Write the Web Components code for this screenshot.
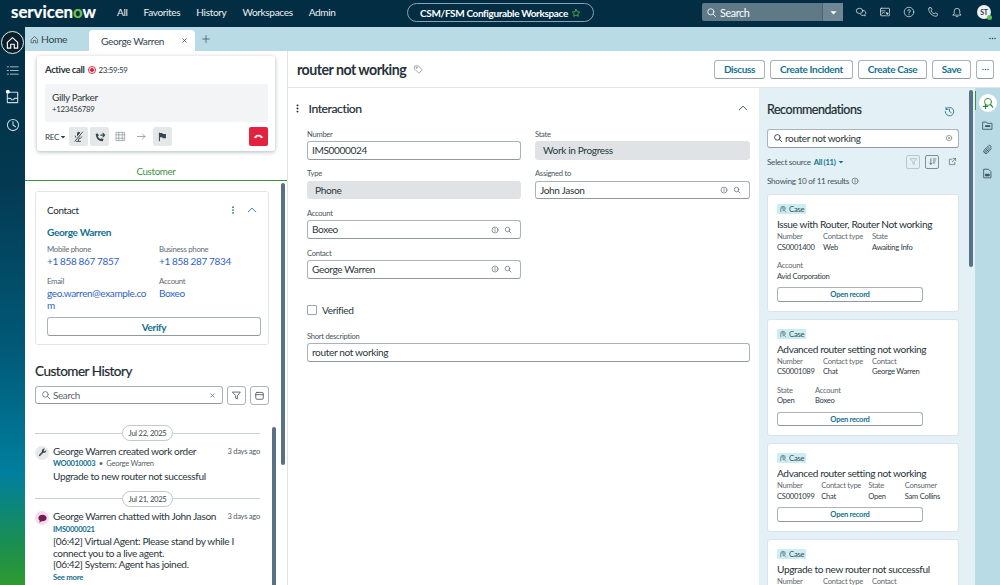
<!DOCTYPE html>
<html lang="en">
<head>
<meta charset="utf-8">
<title>George Warren</title>
<style>
  html, body { margin: 0; height: 100%; overflow: hidden; font-family: Lato, "Noto Sans", sans-serif; color: #1f2a30; background: #fff; }
</style>
</head>
<body>
<sn-app>
  <sn-nav slot="nav"></sn-nav>
  <sn-rail slot="rail"></sn-rail>
  <sn-tabs slot="tabs"></sn-tabs>
  <sn-customer slot="left"></sn-customer>
  <sn-record slot="main"></sn-record>
</sn-app>

<script>
(function () {
  'use strict';

  const ICONS = {
    search: '<circle cx="7" cy="7" r="4.5"/><path d="M10.4 10.4 14 14"/>',
    caret: '<path d="M3.5 6h9L8 11z" fill="currentColor" stroke="none"/>',
    star: '<path d="M8 2.2l1.8 3.7 4 .6-2.9 2.8.7 4L8 11.4l-3.6 1.9.7-4-2.9-2.8 4-.6z"/>',
    chat: '<ellipse cx="6" cy="6.5" rx="4.3" ry="3.5"/><path d="M10 6a3.8 3.2 0 0 1 3.2 5.5l.5 1.7-2-.7a4 4 0 0 1-4.5-1.3"/>',
    monitor: '<rect x="2" y="3" width="12" height="10" rx="1"/><path d="M2 6.5h6"/><path d="M3.5 11l2.5-3 1.5 1.5"/><path d="M8.5 7.5l6 2.2-2.5 1-1 2.5z" fill="currentColor" stroke="#032d42" stroke-width=".6"/>',
    help: '<circle cx="8" cy="8" r="6.4"/><path d="M6.2 6.4A1.8 1.8 0 1 1 8 8.4v1"/><path d="M8 11.3v.5"/>',
    phone: '<path d="M3 2.6l2.4-.6 1.4 3-1.5 1.2a8 8 0 0 0 4.4 4.4L11 9l3 1.4-.6 2.4c-.2.6-.7 1-1.4.9C6.8 13.3 2.7 9.2 2.2 4c-.1-.7.2-1.2.8-1.4z"/>',
    bell: '<path d="M2.8 12.2h10.4l-1.5-2.2V6.8a3.7 3.7 0 0 0-7.4 0V10z"/><path d="M6.8 14.2h2.4"/>',
    home: '<path d="M2.5 7.8 8 2.8l5.5 5V14H9.900V9.800H6.100V14H2.5z"/>',
    list: '<path d="M5.5 3.5H15M5.5 8H15M5.5 12.5H15M1.5 3.5H3M1.5 8H3M1.5 12.5H3"/>',
    inbox: '<path d="M2.5 5.5v9h11v-9"/><path d="M2.5 10H6l1 1.5h2l1-1.5h3.500"/><path d="M4.5 3.5h9v3"/><circle cx="3" cy="3" r="2.1" fill="#fff" stroke="none"/>',
    clock: '<circle cx="8" cy="8" r="6.4"/><path d="M8 4V8l2.8 2"/>',
    close: '<path d="M4 4l8 8M12 4l-8 8"/>',
    plus: '<path d="M8 2.5v11M2.5 8h11"/>',
    mute: '<rect x="6.2" y="2" width="4" height="7.5" rx="2" fill="currentColor" stroke="none"/><path d="M4 7.5a4.2 4.2 0 0 0 8 1M8 12v2M5.5 14h5" stroke-width="1.1"/><path d="M3 14 13 2" stroke="#e5e8e9" stroke-width="2.6"/><path d="M3.5 14 13 2.500" stroke-width="1.1"/>',
    call: '<path d="M3 3.8l2.2-.6 1.2 2.8-1.300 1.100a7 7 0 0 0 3.600 3.700l1.100-1.300 2.800 1.200-.6 2.200c-.2.6-.6.9-1.200.8C6 13.300 3.200 10.300 2.300 5c-.1-.6.2-1 .7-1.200z" fill="currentColor" stroke="none"/><path d="M9 5.500h5M12 3.200l2.200 2.300L12 7.800" stroke-width="1.5"/>',
    grid: '<path d="M5.500 2v12M10.500 2v12M2 5.500h12M2 10.500h12M2 2h12v12H2z"/>',
    arrow: '<path d="M2 8h11M9.500 4.500 13 8l-3.500 3.500"/>',
    flag: '<path d="M3.500 14V3" stroke-width="1.5"/><path d="M3.500 3h4l1 1.500h4.500v6H8.500l-1-1.500h-4z" fill="currentColor" stroke="none"/>',
    hangup: '<path d="M1.800 10c0-1.200.2-1.900.9-2.500C5.700 5 10.300 5 13.300 7.500c.7.6.9 1.300.9 2.500l-3 .5-.7-2.200a7 7 0 0 0-5 0l-.7 2.200z" fill="currentColor" stroke="none"/>',
    tag: '<path d="M2.500 3l5-.5 6 6-5 5-6-6z"/><circle cx="5.300" cy="5.400" r=".8"/>',
    dots: '<circle cx="8" cy="3.500" r="1.400" fill="currentColor" stroke="none"/><circle cx="8" cy="8" r="1.400" fill="currentColor" stroke="none"/><circle cx="8" cy="12.500" r="1.400" fill="currentColor" stroke="none"/>',
    hdots: '<circle cx="3.500" cy="8" r="1.300" fill="currentColor" stroke="none"/><circle cx="8" cy="8" r="1.300" fill="currentColor" stroke="none"/><circle cx="12.500" cy="8" r="1.300" fill="currentColor" stroke="none"/>',
    up: '<path d="M3 10.500 8 5.500l5 5"/>',
    info: '<circle cx="8" cy="8" r="6"/><path d="M8 7.500v3.500M8 4.800v.8"/>',
    filter: '<path d="M2.500 3h11L9.300 8.500V13l-2.600-1V8.500z"/>',
    calendar: '<rect x="2.500" y="3.500" width="11" height="10" rx="2"/><path d="M2.500 6.800h11"/>',
    wrench: '<path d="M13.500 4.300l-2.300 2.200-1.700-1.700 2.200-2.300a3.500 3.500 0 0 0-4.500 4.500L2.500 12 4 13.500l5-5.200a3.500 3.500 0 0 0 4.500-4z" fill="currentColor" stroke="none"/>',
    bubble: '<path d="M8 2.500c3.500 0 6 2 6 4.800s-2.500 4.700-6 4.700c-.6 0-1.100 0-1.600-.1L3.500 14l.5-3C2.800 10 2 8.800 2 7.300 2 4.500 4.500 2.500 8 2.500z" fill="currentColor" stroke="none"/>',
    history: '<path d="M3 4.500A6.200 6.200 0 1 1 1.800 8"/><path d="M2.800 2v3h3M8 4.500V8l2.500 1.500"/>',
    clear: '<circle cx="8" cy="8" r="5.500"/><path d="M6 6l4 4M10 6l-4 4"/>',
    sort: '<path d="M5 3v10M2.800 10.800 5 13l2.200-2.200M9.500 3.500H14M9.500 7H13M9.500 10.500H12"/>',
    open: '<path d="M12 9.500v4H2.500V4H7"/><path d="M9.500 2.500h4v4M13.500 2.500l-6 6"/>',
    reco: '<path d="M3.500 13.500V7a4.500 4.500 0 0 1 9 0c0 2.500-2 4.500-4.500 4.500"/><path d="M6 7a2 2 0 1 1 2 2"/><path d="M10.500 11l3 3"/>',
    reco2: '<circle cx="8" cy="6.500" r="4.700"/><path d="M11.300 10l3 3.500M2 12.500h5.500M4.700 9.800v5.400" stroke-width="1.7"/>',
    folder: '<path d="M1.500 3h5l1.300 1.800h6.700v8.700h-13z"/><path d="M5.500 9H11" stroke-width="2.400"/>',
    clip: '<path d="M13.500 7 8 12.800a3 3 0 0 1-4.500-4.300l6-6a2 2 0 0 1 3 3L7 11a1 1 0 0 1-1.500-1.500l5-5"/><path d="M3 11l3 3M5.500 7l4 4" stroke-width="1"/>',
    doc: '<path d="M3 1.800h6.500L13 5.300v9H3z"/><path d="M5.500 9h5v2.500h-5z" fill="currentColor"/>'
  };

  // the reference's type sits a little tighter than plain Lato
  const shared = new CSSStyleSheet();
  shared.replaceSync('*, :host { letter-spacing: -.036em; }');

  class SnBase extends HTMLElement {
    render(html) {
      const root = this.attachShadow({ mode: 'open' });
      root.adoptedStyleSheets = [shared];
      root.innerHTML = html;
    }
  }

  // one stroke icon out of the table above
  class SnIcon extends HTMLElement {
    connectedCallback() {
      const size = this.getAttribute('size') || 14;
      const weight = this.getAttribute('weight') || 1.2;
      this.attachShadow({ mode: 'open' }).innerHTML = `
        <style>:host { display: inline-flex; flex: none; } svg { display: block; }</style>
        <svg width="${size}" height="${size}" viewBox="0 0 16 16" fill="none" stroke="currentColor"
          stroke-width="${weight}" stroke-linecap="round" stroke-linejoin="round">${ICONS[this.getAttribute('name')] || ''}</svg>`;
    }
  }

  class SnApp extends SnBase {
    constructor() {
      super();
      this.render(`
        <style>
          :host { display: grid; width: 1000px; height: 585px; overflow: hidden;
            grid-template: 27px 24px 1fr / 25px 263px 1fr; }
          ::slotted([slot=nav]) { grid-column: 1 / -1; }
          ::slotted([slot=rail]) { grid-row: 2 / 4; }
          ::slotted([slot=tabs]) { grid-column: 2 / -1; }
        </style>
        <slot name="nav"></slot><slot name="rail"></slot><slot name="tabs"></slot>
        <slot name="left"></slot><slot name="main"></slot>`);
    }
  }

  class SnNav extends SnBase {
    constructor() {
      super();
      const links = ['All', 'Favorites', 'History', 'Workspaces', 'Admin'].map(l => `<a>${l}</a>`).join('');
      const right = ['chat', 'monitor', 'help', 'phone', 'bell'].map(n => `<sn-icon name="${n}" size="12" weight="1"></sn-icon>`).join('');
      this.render(`
        <style>
          :host { display: flex; align-items: center; box-sizing: border-box; padding-bottom: 3px; background: #032d42; color: #e9f0f3; font-size: 10.100px; position: relative; }
          .logo { font-size: 16.800px; font-weight: 700; color: #fff; margin-left: 11px; width: 106px; line-height: 24px; letter-spacing: 0; -webkit-text-stroke: .2px; }
          .logo span { color: #6cc24a; letter-spacing: 0; }
          a { margin-right: 16px; white-space: nowrap; }
          .pill { position: absolute; left: 407px; top: 3px; width: 187px; height: 19px; box-sizing: border-box; border: 1px solid #8ba3ae; border-radius: 11px;
            display: flex; align-items: center; justify-content: center; gap: 3px; font-weight: 700; font-size: 10px; color: #fff; }
          .pill sn-icon { color: #62c14d; }
          .search { margin-left: auto; width: 141px; height: 18px; background: #5f7987; border-radius: 2px; display: flex; align-items: center; color: #fff; font-size: 10.800px; }
          .search sn-icon { margin: 0 3px 0 4px; }
          .search span { flex: 1; }
          .drop { width: 20px; height: 18px; background: #6f8795; border-left: 1px solid #4d6675; display: flex; align-items: center; justify-content: center; }
          .drop sn-icon { margin: 0; }
          .tools { display: flex; gap: 12px; margin: 0 14px 0 12px; color: #dbe5ea; }
          .me { width: 14px; height: 14px; margin-right: 9px; border-radius: 50%; background: #f0f2f3; color: #1f3b4a; font-size: 7px; font-weight: 700; display: flex; align-items: center; justify-content: center; position: relative; }
          .me i { position: absolute; right: -1px; bottom: -1px; width: 5px; height: 5px; border-radius: 50%; background: #62c14d; }
        </style>
        <div class="logo">servicen<span>o</span>w</div>
        ${links}
        <div class="pill">CSM/FSM Configurable Workspace <sn-icon name="star" size="10"></sn-icon></div>
        <div class="search"><sn-icon name="search" size="11"></sn-icon><span>Search</span><div class="drop"><sn-icon name="caret" size="11"></sn-icon></div></div>
        <div class="tools">${right}</div>
        <div class="me">ST<i></i></div>`);
    }
  }

  class SnRail extends SnBase {
    constructor() {
      super();
      this.render(`
        <style>
          :host { display: flex; flex-direction: column; align-items: center; color: #c6d6dd;
            background: linear-gradient(180deg, #032d42 0%, #033a52 28%, #015a78 58%, #007f9e 80%, #1b8f4e 93%, #2f9a2f 100%); }
          .home { width: 21px; height: 21px; margin-top: 4px; border-radius: 50%; background: #0b1f2a; border: 1px solid #e4edf0; color: #fff; display: flex; align-items: center; justify-content: center; }
          .home sn-icon { margin: 0; }
        </style>
        <div class="home"><sn-icon name="home" size="15"></sn-icon></div>
        <sn-icon name="list" size="13" weight="1" style="margin-top:10px"></sn-icon>
        <sn-icon name="inbox" size="15" style="margin-top:12px"></sn-icon>
        <sn-icon name="clock" size="14" style="margin-top:14px"></sn-icon>`);
    }
  }

  class SnTabs extends SnBase {
    constructor() {
      super();
      this.render(`
        <style>
          :host { display: flex; align-items: stretch; background: #b9dbe5; font-size: 10.100px; color: #33464f; }
          .home { display: flex; align-items: center; gap: 2px; width: 64px; padding-left: 5px; box-sizing: border-box; font-size: 10.400px; }
          .tab { width: 106px; margin-top: 3px; background: #fff; border-radius: 4px 4px 0 0; display: flex; align-items: center; justify-content: space-between; padding: 0 7px 0 12px; box-sizing: border-box; }
          .plus { margin: 7px 0 0 6px; color: #3f5661; }
          .more { margin: 7px 3px 0 auto; color: #2b3c44; }
        </style>
        <div class="home"><sn-icon name="home" size="9"></sn-icon>Home</div>
        <div class="tab">George Warren <sn-icon name="close" size="7" weight="1.6"></sn-icon></div>
        <sn-icon class="plus" name="plus" size="10"></sn-icon>
        <sn-icon class="more" name="hdots" size="9"></sn-icon>`);
    }
  }

  class SnBtn extends SnBase {
    constructor() {
      super();
      this.render(`
        <style>
          :host { display: inline-flex; align-items: center; justify-content: center; box-sizing: border-box; height: 19px;
            background: #fff; border: 1px solid #a9b4b9; border-bottom-color: #8f9a9f; border-radius: 3px; color: #14708f; font-weight: 700; font-size: 10px; white-space: nowrap; }
        </style><slot></slot>`);
    }
  }

  class SnCall extends SnBase {
    constructor() {
      super();
      this.render(`
        <style>
          :host { display: block; margin: 5px 12px 0; height: 95px; box-sizing: border-box; padding: 5px 7px 0 8px; background: #fff; border-radius: 3px; box-shadow: 0 1px 4px rgba(30,50,60,.35); font-size: 7.800px; }
          .top { display: flex; align-items: center; height: 17px; font-weight: 700; font-size: 9.500px; gap: 2px; color: #2a363c; }
          .top span { font-weight: 400; font-size: 7.800px; margin-left: 1px; }
          .rec { width: 6px; height: 6px; border-radius: 50%; border: 1px solid #e8243f; background: radial-gradient(#e8243f 45%, #fff 50%); margin-left: 1px; }
          .who { margin-top: 6px; background: #f3f4f5; border-radius: 2px; height: 38px; padding: 6px 7px; box-sizing: border-box; color: #2d3a40; }
          .who b { display: block; font-weight: 400; font-size: 10px; line-height: 14px; }
          .bar { display: flex; align-items: center; margin-top: 5px; color: #38474e; }
          .b { width: 19px; height: 19px; display: flex; align-items: center; justify-content: center; margin-right: 2px; border-radius: 2px; }
          .on { background: #e5e8e9; }
          .recb { width: 24px; font-size: 8.100px; display: flex; align-items: center; color: #2d3a40; }
          .end { margin-left: auto; margin-right: 0; background: #e3223f; color: #fff; }
          .dim { color: #7a868c; }
        </style>
        <div class="top">Active call <i class="rec"></i><span>23:59:59</span></div>
        <div class="who"><b>Gilly Parker</b>+123456789</div>
        <div class="bar">
          <div class="recb">REC<sn-icon name="caret" size="8"></sn-icon></div>
          <div class="b on"><sn-icon name="mute" size="13"></sn-icon></div>
          <div class="b on"><sn-icon name="call" size="12"></sn-icon></div>
          <div class="b dim"><sn-icon name="grid" size="11" weight=".9"></sn-icon></div>
          <div class="b dim"><sn-icon name="arrow" size="11" weight="1"></sn-icon></div>
          <div class="b on"><sn-icon name="flag" size="11"></sn-icon></div>
          <div class="b end"><sn-icon name="hangup" size="11"></sn-icon></div>
        </div>`);
    }
  }

  class SnKv extends SnBase {
    constructor() {
      super();
      this.render(`
        <style>
          :host { display: block; font-size: 7.800px; color: #5d6a70; line-height: 11px; }
          div { font-size: 10px; color: #2f5fc4; line-height: 12px; max-width: 101px; word-break: break-all; }
        </style><slot name="k"></slot><div><slot></slot></div>`);
    }
  }

  class SnContact extends SnBase {
    constructor() {
      super();
      this.render(`
        <style>
          :host { display: block; margin: 10px 18px 0 10px; height: 154px; box-sizing: border-box; border: 1px solid #e2e5e6; border-radius: 3px; padding: 10.5px 7px 0 11px; font-size: 10.100px; }
          .head { display: flex; align-items: center; height: 14px; font-size: 9.900px; color: #222c31; }
          .head sn-icon { color: #1f6f8b; }
          .head sn-icon:first-of-type { margin-left: auto; margin-right: 8px; }
          .head sn-icon:last-of-type { margin-right: 3px; }
          .name { color: #14708f; font-weight: 700; margin: 8.5px 0 5px; line-height: 14px; }
          .grid { display: grid; grid-template-columns: 112px 1fr; row-gap: 9px; width: 214px; }
          sn-btn { width: 100%; height: 19px; margin-top: 6px; }
        </style>
        <div class="head">Contact<sn-icon name="dots" size="10"></sn-icon><sn-icon name="up" size="12"></sn-icon></div>
        <div class="name">George Warren</div>
        <div class="grid">
          <sn-kv><span slot="k">Mobile phone</span>+1 858 867 7857</sn-kv>
          <sn-kv><span slot="k">Business phone</span>+1 858 287 7834</sn-kv>
          <sn-kv><span slot="k">Email</span>geo.warren@example.com</sn-kv>
          <sn-kv><span slot="k">Account</span>Boxeo</sn-kv>
        </div>
        <sn-btn>Verify</sn-btn>`);
    }
  }

  class SnEvent extends SnBase {
    constructor() {
      super();
      const kind = this.getAttribute('kind');
      this.render(`
        <style>
          :host { display: grid; grid-template-columns: 18px 1fr auto; font-size: 10.100px; line-height: 11.5px; color: #2a363c; }
          .ico { grid-row: 1 / 4; width: 14px; height: 14px; border-radius: 50%; display: flex; align-items: center; justify-content: center; margin-top: 1px; }
          .ico.wo { background: #e7e9ea; color: #3c4549; }
          .ico.chat { background: #f9d9ee; color: #6d1f4f; }
          .title { white-space: nowrap; line-height: 12px; }
          .ago { font-size: 7.600px; color: #4f5c62; padding-top: 1px; line-height: 11px; }
          .sub { grid-column: 2 / 4; font-size: 7.600px; color: #56636a; line-height: 11px; margin-top: 1.5px; }
          .body { grid-column: 2 / 4; margin-top: 1.75px; }
        </style>
        <div class="ico ${kind === 'chat' ? 'chat' : 'wo'}"><sn-icon name="${kind === 'chat' ? 'bubble' : 'wrench'}" size="11"></sn-icon></div>
        <div class="title"><slot name="title"></slot></div>
        <div class="ago">3 days ago</div>
        <div class="sub"><slot name="sub"></slot></div>
        <div class="body"><slot></slot></div>`);
    }
  }

  class SnDate extends SnBase {
    constructor() {
      super();
      this.render(`
        <style>
          :host { display: flex; align-items: center; font-size: 7.600px; color: #39464c; }
          :host::before, :host::after { content: ""; flex: 1; height: 1px; background: #c9cfd2; }
          span { border: 1px solid #c3cacd; border-radius: 8px; height: 14px; line-height: 14px; padding: 0 5.5px; background: #fff; }
        </style><span><slot></slot></span>`);
    }
  }

  class SnHistory extends SnBase {
    constructor() {
      super();
      this.render(`
        <style>
          :host { display: block; margin: 18px 18px 0 10px; position: relative; }
          h2 { margin: 0; font-size: 13.500px; font-weight: 400; -webkit-text-stroke: .2px; line-height: 16px; color: #202a2f; }
          .tools { display: flex; gap: 4px; margin-top: 7px; }
          .s { flex: 1; height: 18px; box-sizing: border-box; border: 1px solid #a9b4b9; border-bottom-color: #8f9a9f; border-radius: 3px; display: flex; align-items: center; padding: 0 6px 0 5px; font-size: 9.900px; color: #56636a; gap: 2px; }
          .s span { flex: 1; } .s sn-icon:last-child { color: #56636a; }
          .i { width: 19px; height: 19px; box-sizing: border-box; border: 1px solid #a9b4b9; border-radius: 3px; display: flex; align-items: center; justify-content: center; color: #46545b; }
          .feed { width: 225px; margin-top: 20px; }
          sn-event { margin-top: 3.5px; }
          b { color: #14708f; font-weight: 700; }
          .more { color: #14708f; font-weight: 700; font-size: 7.800px; display: block; line-height: 11px; margin-top: 1px; }
          .bar { position: absolute; left: 237px; top: 64px; width: 4px; height: 200px; background: #567284; border-radius: 2px; }
        </style>
        <h2>Customer History</h2>
        <div class="tools">
          <div class="s"><sn-icon name="search" size="10"></sn-icon><span>Search</span><sn-icon name="close" size="7" weight="1.6"></sn-icon></div>
          <div class="i"><sn-icon name="filter" size="11"></sn-icon></div>
          <div class="i"><sn-icon name="calendar" size="11"></sn-icon></div>
        </div>
        <div class="feed">
          <sn-date>Jul 22, 2025</sn-date>
          <sn-event kind="wo">
            <span slot="title">George Warren created work order</span>
            <span slot="sub"><b>WO0010003</b>&nbsp; •&nbsp; George Warren</span>
            Upgrade to new router not successful
          </sn-event>
          <sn-date style="margin-top:8.25px">Jul 21, 2025</sn-date>
          <sn-event kind="chat">
            <span slot="title">George Warren chatted with John Jason</span>
            <span slot="sub"><b>IMS0000021</b></span>
            [06:42] Virtual Agent: Please stand by while I connect you to a live agent.<br>
            [06:42] System: Agent has joined.
            <span class="more">See more</span>
          </sn-event>
        </div>
        <div class="bar"></div>`);
    }
  }

  class SnCustomer extends SnBase {
    constructor() {
      super();
      this.render(`
        <style>
          :host { display: block; position: relative; overflow: hidden; border-right: 1px solid #dfe3e5; box-sizing: border-box; background: #fff; }
          .tab { margin-top: 14px; height: 15px; border-bottom: 1.5px solid #3f9142; color: #3f9142; font-size: 9.800px; text-align: center; line-height: 12px; }
          .bar { position: absolute; left: 256px; top: 132px; width: 4px; height: 282px; background: #567284; border-radius: 2px; }
        </style>
        <sn-call></sn-call>
        <div class="tab">Customer</div>
        <sn-contact></sn-contact>
        <sn-history></sn-history>
        <div class="bar"></div>`);
    }
  }

  class SnField extends SnBase {
    constructor() {
      super();
      const icons = this.hasAttribute('ref')
        ? '<sn-icon name="info" size="8" weight="1.3"></sn-icon><sn-icon name="search" size="8" weight="1.4"></sn-icon>' : '';
      const ro = this.hasAttribute('readonly');
      this.render(`
        <style>
          :host { display: block; font-size: 7.600px; color: #46545b; line-height: 11px; }
          .box { margin-top: 1.5px; height: 18.7px; box-sizing: border-box; display: flex; align-items: center; gap: 5.5px;
            border: 1px solid #a9b4b9; border-bottom-color: #8f9a9f; border-radius: 3px; padding: 0 8px 0 4px; font-size: 10.100px; color: #2a363c; background: #fff; }
          .box.ro { background: #dfe3e5; border-color: #dfe3e5; padding-left: 7px; }
          .box span { flex: 1; }
          sn-icon { color: #5a686f; }
        </style>
        <div>${this.getAttribute('label')}</div>
        <div class="box ${ro ? 'ro' : ''}"><span>${this.getAttribute('value')}</span>${icons}</div>`);
    }
  }

  class SnForm extends SnBase {
    constructor() {
      super();
      this.render(`
        <style>
          :host { display: block; padding: 12px 9px 0 9px; width: 471px; box-sizing: border-box; }
          .head { display: flex; align-items: center; height: 16px; font-size: 12.200px; color: #202a2f; -webkit-text-stroke: .15px; }
          .head sn-icon:first-child { margin-right: 5.5px; margin-left: -5px; }
          .head sn-icon:last-child { margin-left: auto; color: #37454c; margin-right: 1px; }
          .grid { display: grid; grid-template-columns: 214px 215px; column-gap: 14px; row-gap: 8.5px; margin: 12.5px 0 0 10px; }
          .check { display: flex; align-items: center; gap: 5px; font-size: 10.100px; color: #2a363c; margin: 24px 0 0 10px; height: 14px; }
          .check i { width: 8px; height: 8px; border: 1px solid #9aa5aa; border-radius: 1px; }
          sn-field.full { margin: 14px 0 0 10px; }
        </style>
        <div class="head"><sn-icon name="dots" size="11"></sn-icon>Interaction<sn-icon name="up" size="12"></sn-icon></div>
        <div class="grid">
          <sn-field label="Number" value="IMS0000024"></sn-field>
          <sn-field label="State" value="Work in Progress" readonly></sn-field>
          <sn-field label="Type" value="Phone" readonly></sn-field>
          <sn-field label="Assigned to" value="John Jason" ref></sn-field>
          <sn-field label="Account" value="Boxeo" ref></sn-field>
          <div></div>
          <sn-field label="Contact" value="George Warren" ref></sn-field>
        </div>
        <div class="check"><i></i>Verified</div>
        <sn-field class="full" label="Short description" value="router not working"></sn-field>`);
    }
  }

  class SnMeta extends SnBase {
    constructor() {
      super();
      this.render(`
        <style>
          :host { display: block; font-size: 7.600px; line-height: 10.5px; color: #5d6a70; white-space: nowrap; width: ${this.getAttribute('w') || 46}px; }
          div { color: #2f3b41; }
        </style>${this.getAttribute('k')}<div>${this.getAttribute('v') || ''}</div>`);
    }
  }

  class SnRecCard extends SnBase {
    constructor() {
      super();
      this.render(`
        <style>
          :host { display: block; background: #fff; border: 1px solid #dbe4e8; border-radius: 3px; box-sizing: border-box; padding: 9px; margin-bottom: 7px; }
          .pill { display: flex; width: max-content; align-items: center; gap: 2px; height: 10px; padding: 0 2px; background: #cdeef1; font-size: 7.800px; color: #39505a; border-radius: 1px; }
          .title { font-size: 10.100px; color: #263238; line-height: 14px; margin-top: 3px; white-space: nowrap; }
          ::slotted(.row) { display: flex; }
          sn-btn { width: 146px; height: 14.5px; font-size: 7.600px; margin-top: 6px; display: flex; }
        </style>
        <div class="pill"><sn-icon name="reco" size="8"></sn-icon>Case</div>
        <div class="title">${this.getAttribute('title')}</div>
        <slot></slot>
        <sn-btn>Open record</sn-btn>`);
    }
  }

  class SnRecs extends SnBase {
    constructor() {
      super();
      this.render(`
        <style>
          :host { display: block; background: #e3f0f5; position: relative; overflow: hidden; }
          .in { width: 192px; margin-left: 8px; padding-top: 13px; }
          .top { display: flex; align-items: center; justify-content: space-between; font-size: 12.500px; color: #202a2f; -webkit-text-stroke: .2px; height: 16px; }
          .top sn-icon { color: #1f6f8b; margin: 4px 4px 0 0; }
          .s { margin-top: 12px; height: 18.5px; box-sizing: border-box; background: #fff; border: 1px solid #a9b4b9; border-bottom-color: #8f9a9f; border-radius: 3px; display: flex; align-items: center; padding: 0 5px; gap: 2px; font-size: 10px; color: #2a363c; }
          .s span { flex: 1; } .s sn-icon:last-child { color: #66747a; }
          .src { display: flex; align-items: center; margin-top: 7px; height: 14px; font-size: 8.200px; color: #46545b; gap: 3px; }
          .src b { color: #14708f; font-size: 7.600px; display: flex; align-items: center; gap: 1px; }
          .t { width: 14px; height: 14px; box-sizing: border-box; border: 1px solid #b9c8cf; border-radius: 2px; display: flex; align-items: center; justify-content: center; color: #9eb0b7; }
          .t.on { border-color: #7d8f97; color: #3d5059; margin: 0 6px 0 2px; }
          .t.first { margin-left: auto; }
          .open { color: #4a6470; margin-right: 2px; }
          .n { display: flex; align-items: center; gap: 2px; margin: 7px 0 7.5px; font-size: 8.200px; color: #46545b; height: 11px; }
          .bar { position: absolute; left: 210px; top: 2px; width: 4px; height: 177px; background: #567284; border-radius: 2px; }
        </style>
        <div class="in">
          <div class="top">Recommendations<sn-icon name="history" size="11"></sn-icon></div>
          <div class="s"><sn-icon name="search" size="10" weight="1.4"></sn-icon><span>router not working</span><sn-icon name="clear" size="8"></sn-icon></div>
          <div class="src">Select source <b>All (11)<sn-icon name="caret" size="8"></sn-icon></b>
            <div class="t first"><sn-icon name="filter" size="9"></sn-icon></div>
            <div class="t on"><sn-icon name="sort" size="9"></sn-icon></div>
            <sn-icon class="open" name="open" size="9"></sn-icon>
          </div>
          <div class="n">Showing 10 of 11 results <sn-icon name="info" size="8"></sn-icon></div>
          <sn-rec-card title="Issue with Router, Router Not working">
            <div class="row"><sn-meta k="Number" v="CS0001400"></sn-meta><sn-meta k="Contact type" v="Web" w="49"></sn-meta><sn-meta k="State" v="Awaiting Info"></sn-meta></div>
            <div class="row" style="margin-top:8px"><sn-meta k="Account" v="Avid Corporation"></sn-meta></div>
          </sn-rec-card>
          <sn-rec-card title="Advanced router setting not working">
            <div class="row"><sn-meta k="Number" v="CS0001089"></sn-meta><sn-meta k="Contact type" v="Chat" w="49"></sn-meta><sn-meta k="Contact" v="George Warren"></sn-meta></div>
            <div class="row" style="margin-top:8px"><sn-meta k="State" v="Open" w="38"></sn-meta><sn-meta k="Account" v="Boxeo"></sn-meta></div>
          </sn-rec-card>
          <sn-rec-card title="Advanced router setting not working">
            <div class="row"><sn-meta k="Number" v="CS0001099"></sn-meta><sn-meta k="Contact type" v="Chat" w="49"></sn-meta><sn-meta k="State" v="Open" w="38"></sn-meta><sn-meta k="Consumer" v="Sam Collins"></sn-meta></div>
          </sn-rec-card>
          <sn-rec-card title="Upgrade to new router not successful">
            <div class="row"><sn-meta k="Number"></sn-meta><sn-meta k="Contact type" w="49"></sn-meta><sn-meta k="Contact"></sn-meta></div>
          </sn-rec-card>
        </div>
        <div class="bar"></div>`);
    }
  }

  class SnRecord extends SnBase {
    constructor() {
      super();
      this.render(`
        <style>
          :host { display: grid; grid-template: 37px 1fr / 471px 216px 1fr; min-width: 0; min-height: 0; overflow: hidden; }
          .head { grid-column: 1 / -1; display: flex; align-items: center; gap: 5px; padding: 0 6px 0 9px; border-bottom: 1px solid #e2e5e6; }
          h1 { margin: 0; font-size: 14.200px; font-weight: 700; color: #263238; }
          .tag { color: #8d989d; margin-right: auto; margin-left: 2px; }
          .rail { background: #b9dbe5; display: flex; flex-direction: column; align-items: center; color: #37505c; position: relative; }
          .rail .cur { width: 18px; height: 18px; border-radius: 50%; background: #fff; color: #2e8b36; display: flex; align-items: center; justify-content: center; margin-top: 6px; }
          .rail sn-icon { margin-top: 8px; } .rail .cur sn-icon { margin: 0; }
          .mark { position: absolute; left: 0; top: 3px; width: 1px; height: 19px; background: #3f9142; }
        </style>
        <div class="head">
          <h1>router not working</h1><sn-icon class="tag" name="tag" size="11"></sn-icon>
          <sn-btn style="width:51px">Discuss</sn-btn><sn-btn style="width:83px">Create Incident</sn-btn>
          <sn-btn style="width:69px">Create Case</sn-btn><sn-btn style="width:39px">Save</sn-btn>
          <sn-btn style="width:18px"><sn-icon name="hdots" size="9"></sn-icon></sn-btn>
        </div>
        <sn-form></sn-form>
        <sn-recs></sn-recs>
        <div class="rail">
          <i class="mark"></i>
          <div class="cur"><sn-icon name="reco2" size="12"></sn-icon></div>
          <sn-icon name="folder" size="11"></sn-icon>
          <sn-icon name="clip" size="11" style="margin-top:13px"></sn-icon>
          <sn-icon name="doc" size="11" style="margin-top:13px"></sn-icon>
        </div>`);
    }
  }

  const defs = { 'sn-icon': SnIcon, 'sn-btn': SnBtn, 'sn-kv': SnKv, 'sn-field': SnField, 'sn-meta': SnMeta, 'sn-date': SnDate, 'sn-event': SnEvent,
    'sn-rec-card': SnRecCard, 'sn-contact': SnContact, 'sn-call': SnCall, 'sn-history': SnHistory, 'sn-form': SnForm, 'sn-recs': SnRecs,
    'sn-nav': SnNav, 'sn-rail': SnRail, 'sn-tabs': SnTabs, 'sn-customer': SnCustomer, 'sn-record': SnRecord, 'sn-app': SnApp };
  Object.keys(defs).forEach(k => customElements.define(k, defs[k]));
})();
</script>
</body>
</html>
